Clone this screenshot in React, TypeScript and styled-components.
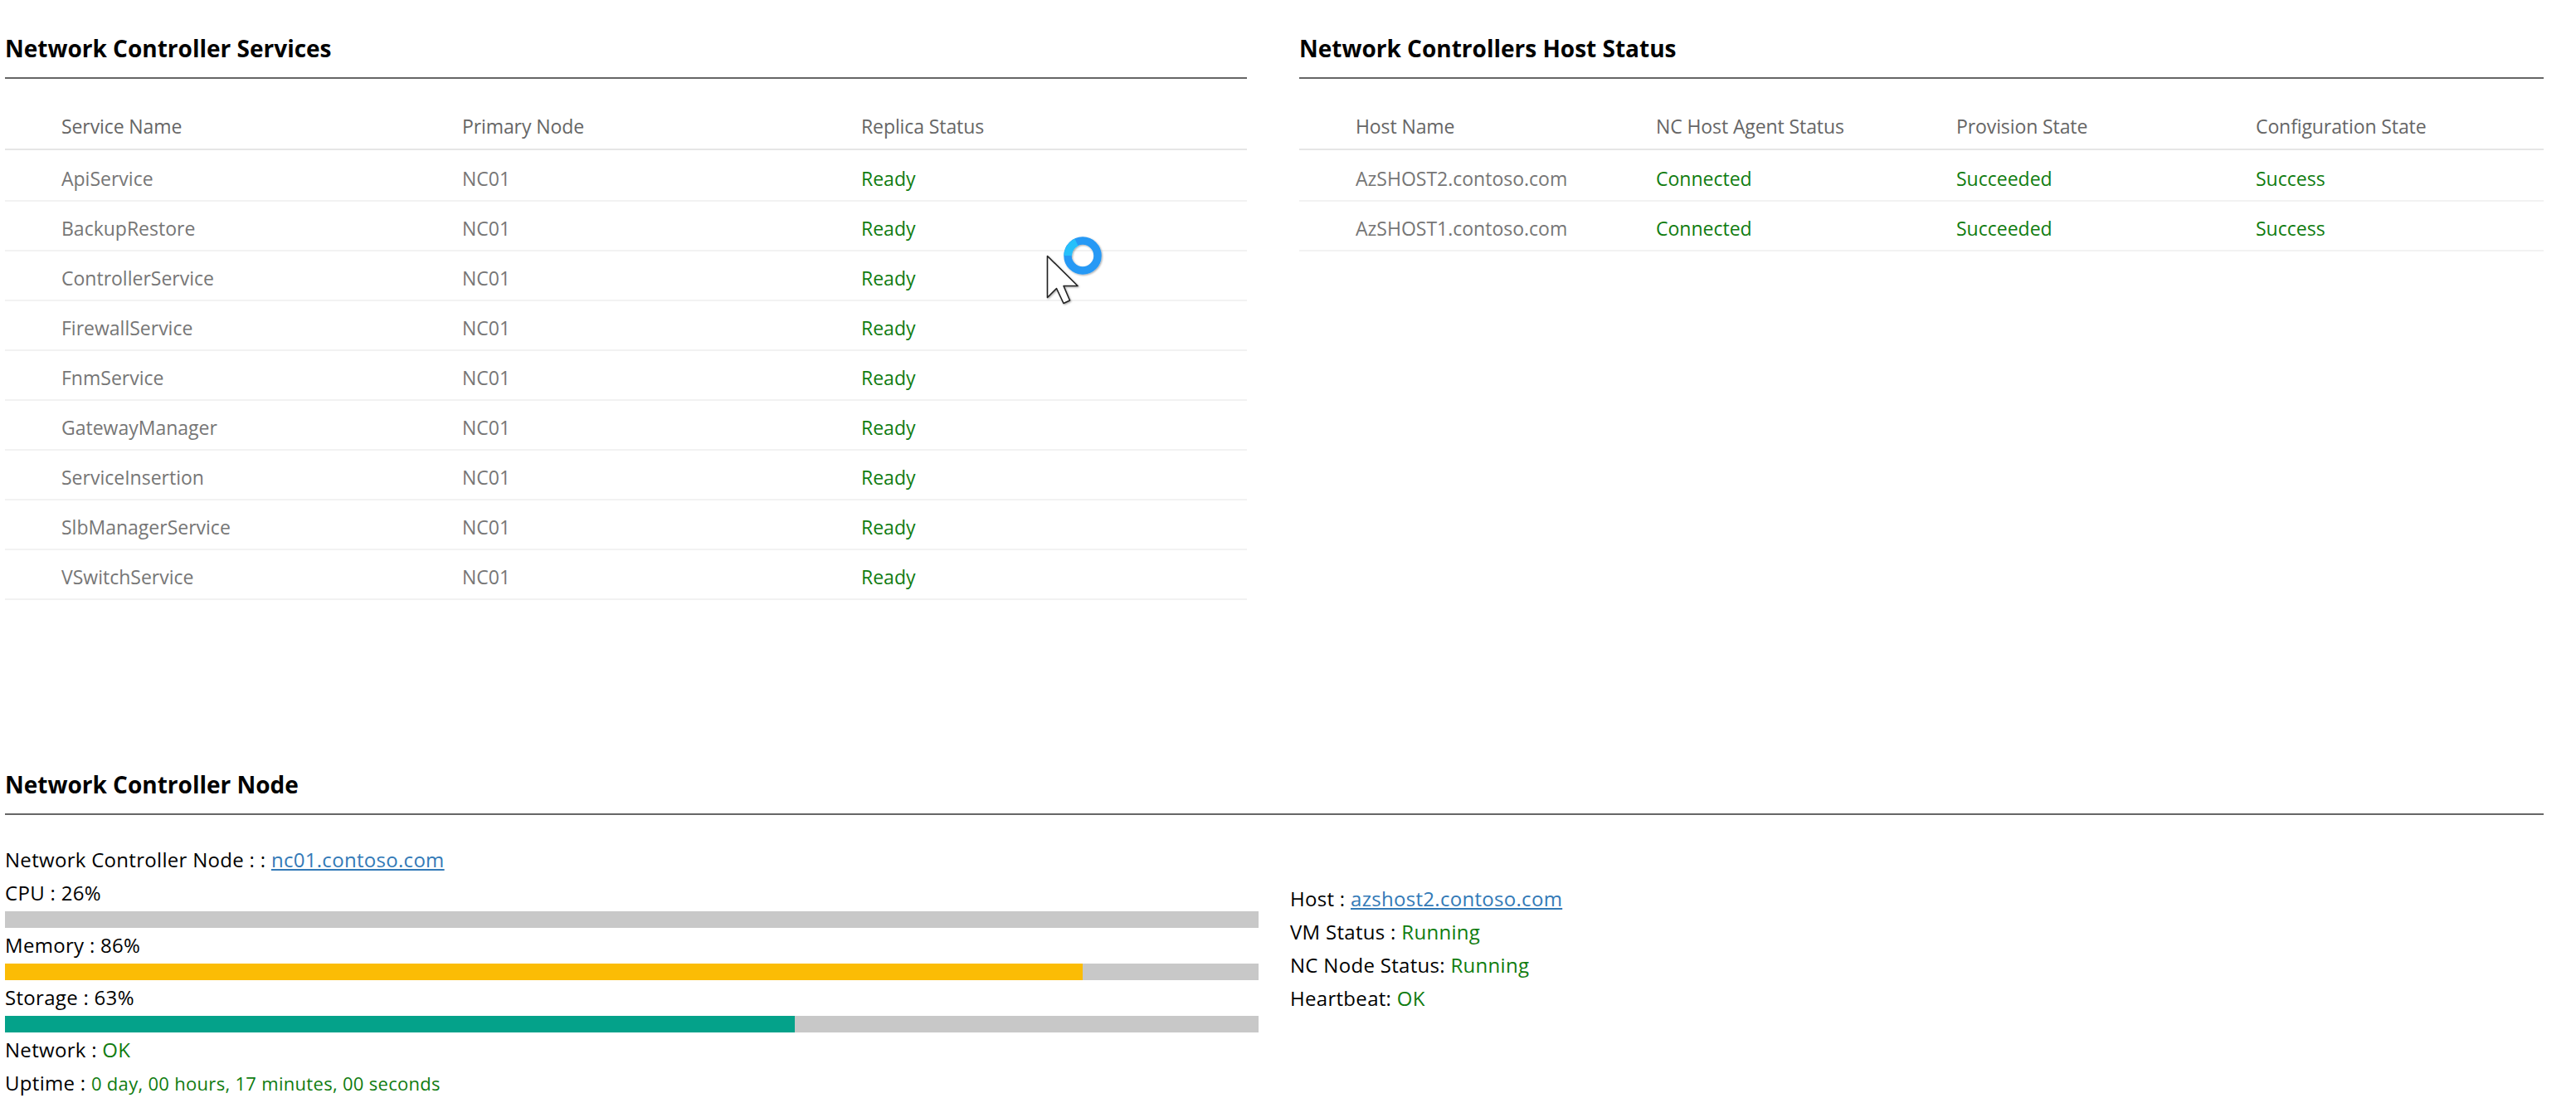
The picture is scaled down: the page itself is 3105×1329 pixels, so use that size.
import React from 'react';
import styled, { createGlobalStyle } from 'styled-components';

const GlobalStyle = createGlobalStyle`
  html, body {
    margin: 0;
    padding: 0;
    background: #fff;
    font-family: "Open Sans", "Noto Sans", "Liberation Sans", sans-serif;
    overflow: hidden;
  }
`;

const Page = styled.div`
  position: relative;
  width: 3105px;
  height: 1329px;
  padding-left: 6px;
  box-sizing: border-box;
`;

const TopRow = styled.div`
  display: flex;
  gap: 63px;
  height: 887px;
  padding-right: 39px;
`;

const Section = styled.section<{ $width: number }>`
  width: ${(p) => p.$width}px;
`;

const Heading = styled.h2`
  margin: 0;
  height: 95px;
  box-sizing: border-box;
  padding-top: 38px;
  border-bottom: 2px solid #666;
  font-size: 28px;
  line-height: 40px;
  font-weight: 700;
  letter-spacing: 0;
  color: #000;
`;

const Table = styled.div`
  margin-top: 25px;
`;

const Row = styled.div<{ $columns: string; $header?: boolean }>`
  display: grid;
  grid-template-columns: ${(p) => p.$columns};
  height: ${(p) => (p.$header ? 61 : 60)}px;
  margin-bottom: ${(p) => (p.$header ? 1.5 : 0)}px;
  box-sizing: border-box;
  border-bottom: 2px solid ${(p) => (p.$header ? '#e6e6e6' : '#f2f2f2')};
  align-items: center;
  padding-top: ${(p) => (p.$header ? 4 : 6)}px;
`;

const Cell = styled.div<{ $tone?: 'head' | 'ok' }>`
  font-size: 23px;
  line-height: 32px;
  letter-spacing: ${(p) => (p.$tone === 'head' ? -0.1 : 0)}px;
  white-space: nowrap;
  color: ${(p) => (p.$tone === 'ok' ? '#107c10' : p.$tone === 'head' ? '#666' : '#767676')};
`;

const NodeBody = styled.div`
  display: flex;
  margin-top: 34px;
`;

const NodeStats = styled.div`
  width: 1511px;
`;

const HostStats = styled.div`
  margin-top: 47px;
  margin-left: 38px;
`;

const Line = styled.div`
  font-size: 24px;
  letter-spacing: 0.3px;
  line-height: 40px;
  height: 40px;
  white-space: nowrap;
  color: #000;
`;

const Ok = styled.span<{ $small?: boolean }>`
  color: #107c10;
  font-size: ${(p) => (p.$small ? 22 : 24)}px;
`;

const NodeLink = styled.a`
  color: #337ab7;
  text-decoration: underline;
`;

const Track = styled.div`
  height: 20px;
  margin: 2px 0 1px;
  background: #c8c8c8;
`;

const Fill = styled.div<{ $color: string }>`
  height: 100%;
  background: ${(p) => p.$color};
`;

const BusyCursor = styled.svg`
  position: absolute;
  left: 1250px;
  top: 275px;
`;

const serviceColumns = '68px 483px 481px 1fr';
const hostColumns = '68px 362px 362px 361px 1fr';

const services = [
  'ApiService',
  'BackupRestore',
  'ControllerService',
  'FirewallService',
  'FnmService',
  'GatewayManager',
  'ServiceInsertion',
  'SlbManagerService',
  'VSwitchService',
];

const hosts = ['AzSHOST2.contoso.com', 'AzSHOST1.contoso.com'];

const usage = [
  { label: 'CPU', value: 26, color: 'transparent' },
  { label: 'Memory', value: 86, color: '#fbbc05' },
  { label: 'Storage', value: 63, color: '#04a28a' },
];

const App: React.FC = () => (
  <Page>
    <GlobalStyle />
    <TopRow>
      <Section $width={1497}>
        <Heading>Network Controller Services</Heading>
        <Table>
          <Row $columns={serviceColumns} $header>
            <span />
            <Cell $tone="head">Service Name</Cell>
            <Cell $tone="head">Primary Node</Cell>
            <Cell $tone="head">Replica Status</Cell>
          </Row>
          {services.map((name) => (
            <Row $columns={serviceColumns} key={name}>
              <span />
              <Cell>{name}</Cell>
              <Cell>NC01</Cell>
              <Cell $tone="ok">Ready</Cell>
            </Row>
          ))}
        </Table>
      </Section>
      <Section $width={1500}>
        <Heading>Network Controllers Host Status</Heading>
        <Table>
          <Row $columns={hostColumns} $header>
            <span />
            <Cell $tone="head">Host Name</Cell>
            <Cell $tone="head">NC Host Agent Status</Cell>
            <Cell $tone="head">Provision State</Cell>
            <Cell $tone="head">Configuration State</Cell>
          </Row>
          {hosts.map((name) => (
            <Row $columns={hostColumns} key={name}>
              <span />
              <Cell>{name}</Cell>
              <Cell $tone="ok">Connected</Cell>
              <Cell $tone="ok">Succeeded</Cell>
              <Cell $tone="ok">Success</Cell>
            </Row>
          ))}
        </Table>
      </Section>
    </TopRow>

    <Section $width={3060}>
      <Heading>Network Controller Node</Heading>
      <NodeBody>
        <NodeStats>
          <Line>
            Network Controller Node : : <NodeLink href="#">nc01.contoso.com</NodeLink>
          </Line>
          {usage.map((item) => (
            <React.Fragment key={item.label}>
              <Line>
                {item.label} : {item.value}%
              </Line>
              <Track>
                <Fill $color={item.color} style={{ width: `${item.value}%` }} />
              </Track>
            </React.Fragment>
          ))}
          <Line>
            Network : <Ok>OK</Ok>
          </Line>
          <Line>
            Uptime : <Ok $small>0 day, 00 hours, 17 minutes, 00 seconds</Ok>
          </Line>
        </NodeStats>
        <HostStats>
          <Line>
            Host : <NodeLink href="#">azshost2.contoso.com</NodeLink>
          </Line>
          <Line>
            VM Status : <Ok>Running</Ok>
          </Line>
          <Line>
            NC Node Status: <Ok>Running</Ok>
          </Line>
          <Line>
            Heartbeat: <Ok>OK</Ok>
          </Line>
        </HostStats>
      </NodeBody>
    </Section>

    <BusyCursor width="90" height="100" viewBox="0 0 90 100">
      <defs>
        <filter id="soft" x="-20%" y="-20%" width="150%" height="150%">
          <feDropShadow dx="1" dy="1" stdDeviation="1.2" floodColor="#000" floodOpacity="0.35" />
        </filter>
      </defs>
      <path
        d="M12.5 33.5 L49 69.5 L32 69.5 L39.5 87 L32 90.5 L23.5 72.5 L12.5 83.5 Z"
        fill="#fff"
        stroke="#222"
        strokeWidth="1.6"
        strokeLinejoin="round"
        filter="url(#soft)"
      />
      <g filter="url(#soft)">
        <circle cx="55" cy="33" r="18" fill="none" stroke="#2899f5" strokeWidth="9.5" />
        <path d="M37.3 33 A18 18 0 0 1 47.5 17" fill="none" stroke="#27c0fa" strokeWidth="9.5" />
      </g>
    </BusyCursor>
  </Page>
);

export default App;
